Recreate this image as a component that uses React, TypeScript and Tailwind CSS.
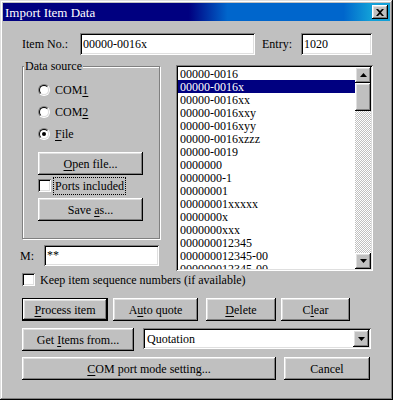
import React from "react";

const raised =
  "bg-[#c0c0c0] shadow-[inset_-1px_-1px_#000,inset_1px_1px_#fff,inset_-2px_-2px_#808080,inset_2px_2px_#dfdfdf]";
const sunken =
  "bg-white shadow-[inset_1px_1px_#808080,inset_-1px_-1px_#fff,inset_2px_2px_#000,inset_-2px_-2px_#dfdfdf]";

function U({ children }: { children: React.ReactNode }) {
  return <span className="underline underline-offset-[2px]">{children}</span>;
}

function Btn({
  w,
  className = "",
  children,
  def = false,
}: {
  w: string;
  className?: string;
  children: React.ReactNode;
  def?: boolean;
}) {
  if (def) {
    return (
      <div className={`${w} h-[23px] border border-black ${className}`}>
        <div className={`w-full h-full flex items-center justify-center ${raised}`}>{children}</div>
      </div>
    );
  }
  return (
    <div className={`${w} h-[23px] flex items-center justify-center ${raised} ${className}`}>
      {children}
    </div>
  );
}

function Radio({ checked = false }: { checked?: boolean }) {
  return (
    <div className="w-[12px] h-[12px] shrink-0 rounded-full border border-t-[#808080] border-l-[#808080] border-b-white border-r-white">
      <div className="w-full h-full rounded-full border border-t-black border-l-black border-b-[#dfdfdf] border-r-[#dfdfdf] bg-white flex items-center justify-center">
        {checked && <div className="w-[4px] h-[4px] rounded-full bg-black" />}
      </div>
    </div>
  );
}

function Check() {
  return <div className={`w-[13px] h-[13px] shrink-0 ${sunken}`} />;
}

function Tri({ up = false }: { up?: boolean }) {
  return (
    <svg width="7" height="4" viewBox="0 0 7 4">
      {up ? <path d="M3.5 0L7 4H0Z" fill="#000" /> : <path d="M0 0H7L3.5 4Z" fill="#000" />}
    </svg>
  );
}

const items = [
  "00000-0016",
  "00000-0016x",
  "00000-0016xx",
  "00000-0016xxy",
  "00000-0016xyy",
  "00000-0016xzzz",
  "00000-0019",
  "0000000",
  "0000000-1",
  "00000001",
  "00000001xxxxx",
  "0000000x",
  "0000000xxx",
  "000000012345",
  "000000012345-00",
  "000000012345-00",
];

export default function App() {
  return (
    <div className="w-[393px] h-[400px] bg-[#c0c0c0] p-[3px] flex flex-col shadow-[inset_-1px_-1px_#000,inset_1px_1px_#dfdfdf,inset_-2px_-2px_#808080,inset_2px_2px_#fff] font-['Liberation_Serif',serif] text-[12px] leading-none text-black">
      {/* Title bar */}
      <div className="h-[18px] flex items-center justify-between pl-[2px] pr-[2px] bg-[linear-gradient(to_right,#000080_0%,#000080_48%,#0066cc_58%,#0066cc_88%,#12a0d8_95%)]">
        <span className="text-white text-[13px]">Import Item Data</span>
        <div className={`w-[16px] h-[14px] flex items-center justify-center ${raised}`}>
          <svg width="8" height="7" viewBox="0 0 8 7">
            <path d="M0 0h2l2 2 2-2h2L5 3.5 8 7H6L4 5 2 7H0l3-3.5Z" fill="#000" />
          </svg>
        </div>
      </div>

      {/* Row 1 */}
      <div className="mt-[12px] ml-[19px] flex items-center h-[22px]">
        <span className="w-[58px]">Item No.:</span>
        <div className={`w-[175px] h-[22px] flex items-center pl-[3px] ${sunken}`}>00000-0016x</div>
        <span className="ml-[7px] w-[39px]">Entry:</span>
        <div className={`w-[71px] h-[22px] flex items-center pl-[3px] ${sunken}`}>1020</div>
      </div>

      {/* Row 2 */}
      <div className="mt-[10px] ml-[19px] flex">
        <div className="w-[138px] flex flex-col">
          <div className="mt-[1px] h-[173px] relative border border-[#808080] shadow-[inset_1px_1px_#fff,1px_1px_#fff] flex flex-col pl-[15px]">
            <span className="absolute -top-[7px] left-[1px] bg-[#c0c0c0] px-[1px]">Data source</span>
            <div className="mt-[12px] h-[22px] flex items-center gap-[5px]">
              <Radio />
              <span>
                COM<U>1</U>
              </span>
            </div>
            <div className="h-[22px] flex items-center gap-[5px]">
              <Radio />
              <span>
                COM<U>2</U>
              </span>
            </div>
            <div className="h-[22px] flex items-center gap-[5px]">
              <Radio checked />
              <span>
                <U>F</U>ile
              </span>
            </div>
            <Btn w="w-[105px]" className="mt-[7px]">
              <span>
                <U>O</U>pen file...
              </span>
            </Btn>
            <div className="mt-[4px] h-[13px] flex items-center">
              <Check />
              <span className="ml-[3px] px-[1px] py-[2px] outline outline-1 outline-dotted outline-black">Ports included</span>
            </div>
            <Btn w="w-[105px]" className="mt-[6px]">
              <span>
                Save <U>a</U>s...
              </span>
            </Btn>
          </div>
          <div className="mt-[6px] h-[21px] flex items-center -ml-[2px]">
            <span className="w-[24px]">M:</span>
            <div className={`w-[115px] h-[21px] flex items-start pt-[4px] pl-[3px] ${sunken}`}>**</div>
          </div>
        </div>

        {/* List */}
        <div className={`ml-[16px] w-[197px] h-[206px] p-[2px] flex ${sunken}`}>
          <div className="flex-1 overflow-hidden flex flex-col">
            {items.map((t, i) => (
              <div
                key={i}
                className={`h-[13px] shrink-0 flex items-center pl-[2px] ${i === 1 ? "bg-[#000080] text-white" : ""}`}
              >
                {t}
              </div>
            ))}
          </div>
          <div className="w-[16px] flex flex-col bg-[repeating-conic-gradient(#c0c0c0_0_25%,#fff_0_50%)] bg-[length:2px_2px]">
            <div className={`h-[16px] flex items-center justify-center ${raised}`}>
              <Tri up />
            </div>
            <div className={`h-[28px] ${raised}`} />
            <div className="flex-1" />
            <div className={`h-[16px] flex items-center justify-center ${raised}`}>
              <Tri />
            </div>
          </div>
        </div>
      </div>

      {/* Keep row */}
      <div className="mt-[2px] ml-[19px] h-[13px] flex items-center">
        <Check />
        <span className="ml-[5px]">Keep item sequence numbers (if available)</span>
      </div>

      {/* Buttons row 1 */}
      <div className="mt-[12px] ml-[19px] flex">
        <Btn w="w-[86px]" def>
          <span>
            <U>P</U>rocess item
          </span>
        </Btn>
        <Btn w="w-[85px]" className="ml-[5px]">
          <span>
            A<U>u</U>to quote
          </span>
        </Btn>
        <Btn w="w-[70px]" className="ml-[8px]">
          <span>
            <U>D</U>elete
          </span>
        </Btn>
        <Btn w="w-[69px]" className="ml-[5px]">
          <span>
            C<U>l</U>ear
          </span>
        </Btn>
      </div>

      {/* Buttons row 2 */}
      <div className="mt-[7px] ml-[19px] flex items-start">
        <Btn w="w-[112px]">
          <span>
            Get <U>I</U>tems from...
          </span>
        </Btn>
        <div className={`ml-[9px] w-[228px] h-[21px] p-[2px] flex ${sunken}`}>
          <div className="flex-1 flex items-center pl-[2px]">Quotation</div>
          <div className={`w-[16px] h-[17px] flex items-center justify-center ${raised}`}>
            <Tri />
          </div>
        </div>
      </div>

      {/* Buttons row 3 */}
      <div className="mt-[6px] ml-[19px] flex">
        <Btn w="w-[254px]">
          <span>
            <U>C</U>OM port mode setting...
          </span>
        </Btn>
        <Btn w="w-[86px]" className="ml-[8px]">
          <span>Cancel</span>
        </Btn>
      </div>
    </div>
  );
}
